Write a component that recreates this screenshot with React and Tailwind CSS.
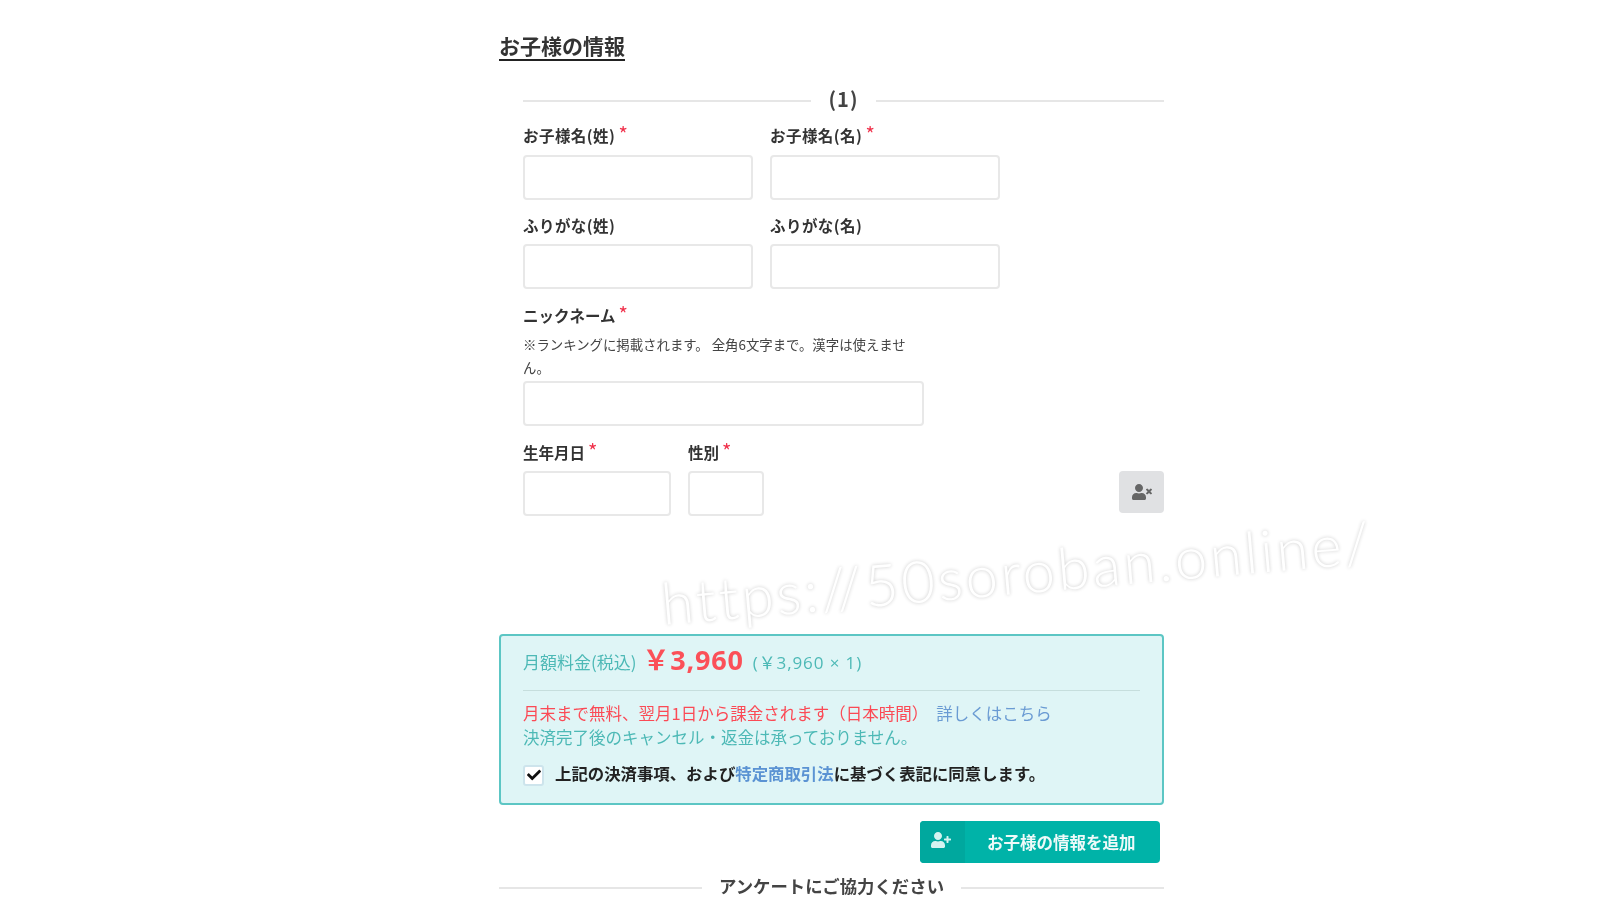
import { FaCheck, FaUserPlus, FaUserTimes } from "react-icons/fa";

const jp = "font-['Noto_Sans_CJK_JP','Noto_Sans',sans-serif]";

function Field({ label, required, width, wide }) {
  return (
    <div className={width}>
      <div className={`flex h-[24px] items-center text-[15.5px] font-bold leading-[24px] text-[#333] ${wide ? "tracking-[0.45px]" : ""}`}>
        {label}
        {required && <span className="ml-[3px] -translate-y-[1px] text-[20px] font-normal leading-none text-[#f0304a]">*</span>}
      </div>
    </div>
  );
}

function Input({ width }) {
  return <div className={`${width} h-[45px] rounded-[4px] border-2 border-[#e8e8e8] bg-white`} />;
}

export default function App() {
  return (
    <div className={`${jp} relative h-[900px] w-[1600px] overflow-hidden bg-white blur-[0.5px]`}>
      <div className="ml-[499px] w-[665px] pt-[32px]">
        <h2 className="w-fit border-b-2 border-[#222] pb-[1px] text-[21px] font-bold leading-[26px] text-[#333]">お子様の情報</h2>

        <div className="pl-[24px]">
          <div className="mt-[26px] flex h-[24px] items-center text-[#444]">
            <div className="h-[2px] flex-1 translate-y-[2px] bg-[#e6e6e6]" />
            <span className="mx-[18px] text-[20px] font-bold tracking-[1px]">(1)</span>
            <div className="h-[2px] flex-1 translate-y-[2px] bg-[#e6e6e6]" />
          </div>

          <div className="mt-[12px] flex gap-[17px]">
            <Field label="お子様名(姓)" required wide width="w-[230px]" />
            <Field label="お子様名(名)" required wide width="w-[230px]" />
          </div>
          <div className="mt-[8px] flex gap-[17px]">
            <Input width="w-[230px]" />
            <Input width="w-[230px]" />
          </div>

          <div className="mt-[13px] flex gap-[17px]">
            <Field label="ふりがな(姓)" wide width="w-[230px]" />
            <Field label="ふりがな(名)" wide width="w-[230px]" />
          </div>
          <div className="mt-[7px] flex gap-[17px]">
            <Input width="w-[230px]" />
            <Input width="w-[230px]" />
          </div>

          <div className="mt-[14px]">
            <Field label="ニックネーム" required />
          </div>
          <p className="mt-[6px] w-[385px] text-[13.4px] leading-[23px] text-[#444]">
            ※ランキングに掲載されます。 全角6文字まで。漢字は使えません。
          </p>
          <div className="mt-[2px]">
            <Input width="w-[401px]" />
          </div>

          <div className="mt-[14px] flex gap-[17px]">
            <Field label="生年月日" required width="w-[148px]" />
            <Field label="性別" required width="w-[76px]" />
          </div>
          <div className="mt-[7px] flex gap-[17px]">
            <Input width="w-[148px]" />
            <Input width="w-[76px]" />
            <button className="ml-auto flex h-[42px] w-[45px] items-center justify-center rounded-[4px] bg-[#e0e1e3] text-[#666]">
              <FaUserTimes size={20} />
            </button>
          </div>
        </div>

        <div className="mt-[118px] h-[171px] rounded-[4px] border-2 border-[#5cc6c4] bg-[#dff5f6] px-[22px] pt-[5px]">
          <div className="flex h-[40px] items-center text-[#4db9b6]">
            <span className="text-[17px] leading-none">月額料金(税込)</span>
            <span className="ml-[6px] -translate-y-[2px] font-['Open_Sans','Noto_Sans_CJK_JP',sans-serif] text-[27px] font-bold leading-none tracking-[0.8px] text-[#fb5058]">￥3,960</span>
            <span className="ml-[9px] translate-y-[1px] font-['Open_Sans','Noto_Sans_CJK_JP',sans-serif] text-[17px] leading-none tracking-[0.9px]">(￥3,960 × 1)</span>
          </div>
          <div className="mt-[9px] h-px bg-[#c6dedd]" />
          <p className="mt-[10px] text-[16.5px] leading-[24px] text-[#fb4a55]">
            月末まで無料、翌月1日から課金されます（日本時間）
            <span className="ml-[8px] text-[#6a9bd3]">詳しくはこちら</span>
          </p>
          <p className="text-[16.5px] leading-[24px] text-[#4db9b6]">決済完了後のキャンセル・返金は承っておりません。</p>
          <div className="mt-[12px] flex items-center">
            <span className="flex h-[21px] w-[21px] translate-y-[2px] items-center justify-center rounded-[3px] border-2 border-[#cde4ec] bg-white text-[#111]">
              <FaCheck size={14} />
            </span>
            <span className="ml-[11px] text-[16.4px] font-bold leading-[24px] text-[#222]">
              上記の決済事項、および<span className="text-[#5b93d3]">特定商取引法</span>に基づく表記に同意します。
            </span>
          </div>
        </div>

        <div className="mt-[16px] flex justify-end pr-[4px]">
          <button className="flex h-[42px] w-[240px] items-center overflow-hidden rounded-[4px] bg-[#00b3a8] text-white">
            <span className="flex h-full w-[45px] items-center justify-center bg-[#00a89e]">
              <FaUserPlus size={20} className="-translate-x-[2px] -translate-y-[2px] text-[#d5f3f0]" />
            </span>
            <span className="ml-[22px] text-[16.5px] font-bold text-[#eefaf9]">お子様の情報を追加</span>
          </button>
        </div>

        <div className="mt-[9px] flex h-[28px] items-center text-[#444]">
          <div className="h-[2px] flex-1 translate-y-[2px] bg-[#e6e6e6]" />
          <span className="mx-[17px] text-[17.4px] font-bold">アンケートにご協力ください</span>
          <div className="h-[2px] flex-1 translate-y-[2px] bg-[#e6e6e6]" />
        </div>
      </div>

      <div className="absolute left-[660px] top-[528px] -rotate-[5deg] font-['Lato',sans-serif] text-[58px] font-light tracking-[3px] whitespace-nowrap text-white [text-shadow:0_0_4px_#c8c8c8]">
        https://50soroban.online/
      </div>
    </div>
  );
}
